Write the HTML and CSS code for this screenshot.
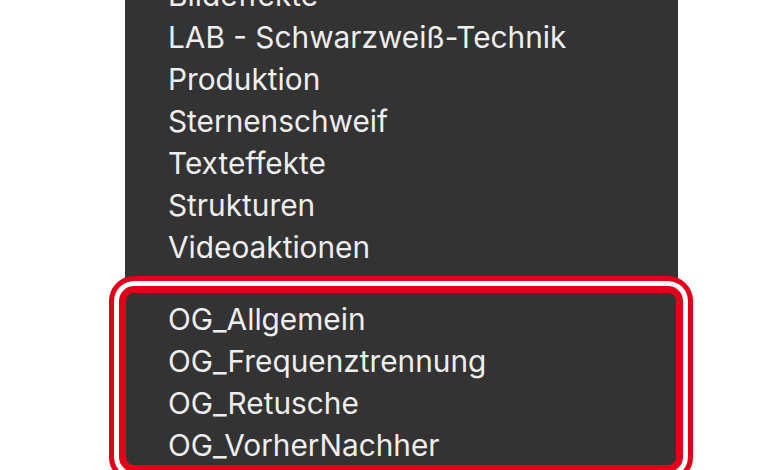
FILE: index.html
```html
<!DOCTYPE html>
<html lang="de">
<head>
<meta charset="utf-8">
<title>Aktionen</title>
<link rel="stylesheet" href="styles.css">
</head>
<body>
<div class="stage">
  <div class="menu">
    <ul class="group">
      <li>Bildeffekte</li>
      <li>LAB - Schwarzweiß-Technik</li>
      <li>Produktion</li>
      <li>Sternenschweif</li>
      <li>Texteffekte</li>
      <li>Strukturen</li>
      <li>Videoaktionen</li>
    </ul>
    <div class="separator"></div>
    <ul class="group">
      <li>OG_Allgemein</li>
      <li>OG_Frequenztrennung</li>
      <li>OG_Retusche</li>
      <li>OG_VorherNachher</li>
    </ul>
  </div>
  <div class="highlight"></div>
</div>
</body>
</html>
```
FILE: styles.css
```css
html, body {
  margin: 0;
  padding: 0;
  background: #ffffff;
  overflow: hidden;
}

.stage {
  position: relative;
  width: 780px;
  height: 470px;
  overflow: hidden;
}

.menu {
  margin-left: 125px;
  width: 553px;
  margin-top: -26px;
  background: #333333;
  padding-bottom: 40px;
  font-family: Inter, "Noto Sans", sans-serif;
  font-size: 29.8px;
  color: #eeeeee;
}

.group {
  list-style: none;
  margin: 0;
  padding: 0 0 0 43px;
}

.group li {
  line-height: 42px;
  height: 42px;
  white-space: nowrap;
}

.separator {
  height: 30px;
  display: flex;
  align-items: center;
  padding: 0 20px;
}

.separator::after {
  content: "";
  flex: 1;
  height: 1px;
  background: #4a4a4a;
}

.highlight {
  position: absolute;
  left: 109px;
  top: 276px;
  width: 584px;
  height: 206px;
  box-sizing: border-box;
  border: 5px solid #e2001a;
  border-radius: 25px;
  box-shadow: inset 0 0 0 5px #ffffff, inset 0 0 0 12px #e2001a;
}
```
